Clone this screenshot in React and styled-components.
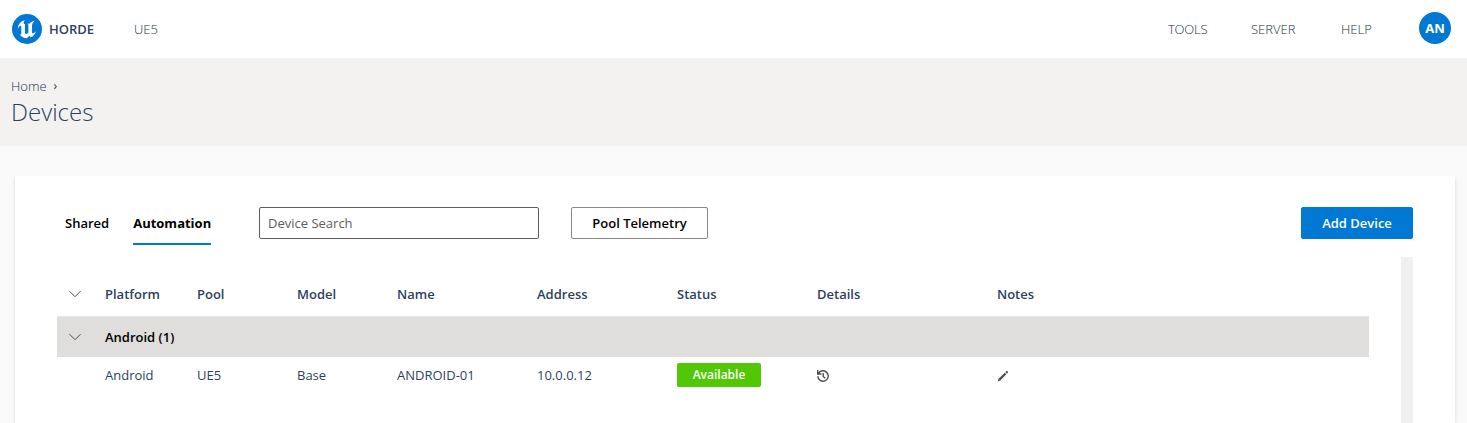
import React from "react";
import styled, { createGlobalStyle } from "styled-components";

const GlobalStyle = createGlobalStyle`
  * { box-sizing: border-box; }
  html, body { margin: 0; height: 100%; overflow: hidden; }
  body { background: #f9f9f9; color: #2d3f5f; font: 400 13px/18px "Open Sans", sans-serif; }
  #root { height: 100%; }
`;

const Page = styled.div`
  height: 100%;
  display: flex;
  flex-direction: column;
`;
const TopBar = styled.header`
  flex: none;
  height: 58px;
  padding: 0 16px 2px 12px;
  display: flex;
  align-items: center;
  background: #fff;
`;
const Brand = styled.div`
  display: flex;
  align-items: center;
  gap: 7px;
  width: 122px;
  font-size: 13px;
  font-weight: 600;
  padding-top: 2px;
`;
const NavLink = styled.a`
  width: ${(p) => p.$width};
  padding-top: 2px;
  font: 300 13px/18px "Open Sans", sans-serif;
  letter-spacing: ${(p) => p.$tracking || "0"};
  color: #25343e;
`;
const Spacer = styled.div`
  flex: 1;
`;
const Avatar = styled.div`
  width: 32px;
  height: 32px;
  border-radius: 50%;
  display: grid;
  place-items: center;
  background: #0078d4;
  color: #fff;
  font-weight: 700;
`;
const PageHeader = styled.section`
  flex: none;
  height: 88px;
  padding: 19px 12px 0 11px;
  background: #f3f2f1;
`;
const Breadcrumb = styled.div`
  display: flex;
  gap: 7px;
  line-height: 18px;
  font-weight: 300;
  color: #1c2f50;
`;
const Chevron = styled.span`
  font-size: 12px;
  font-weight: 400;
`;
const Title = styled.h1`
  margin: 0;
  font-size: 24px;
  line-height: 33px;
  font-weight: 300;
`;
const Card = styled.main`
  flex: 1;
  min-height: 0;
  margin: 30px 12px 0 15px;
  padding: 31px 42px 0;
  display: flex;
  flex-direction: column;
  background: #fff;
  box-shadow: 0 1.6px 3.6px rgba(0, 0, 0, 0.13), 0 0.3px 0.9px rgba(0, 0, 0, 0.11);
`;
const Toolbar = styled.div`
  flex: none;
  height: 50px;
  display: flex;
  align-items: flex-start;
`;
const Tabs = styled.div`
  display: flex;
  gap: 24px;
  width: 202px;
  padding-left: 8px;
`;
const Tab = styled.div`
  height: 38px;
  line-height: 32px;
  color: #000;
  font-weight: ${(p) => (p.$active ? 700 : 600)};
  border-bottom: 2px solid ${(p) => (p.$active ? "#0078d4" : "transparent")};
`;
const SearchInput = styled.input`
  width: 280px;
  height: 32px;
  margin-right: 32px;
  padding: 0 8px;
  border: 1px solid #605e5c;
  border-radius: 2px;
  font: inherit;
  outline: none;
  &::placeholder { color: #605e5c; opacity: 1; }
`;
const Button = styled.button`
  width: ${(p) => p.$width};
  height: 32px;
  padding: 0;
  border: 1px solid ${(p) => (p.$primary ? "#0078d4" : "#8a8886")};
  border-radius: 2px;
  background: ${(p) => (p.$primary ? "#0078d4" : "#fff")};
  color: ${(p) => (p.$primary ? "#fff" : "#000")};
  font: inherit;
  font-weight: 600;
`;
const ScrollArea = styled.div`
  flex: 1;
  min-height: 0;
  display: flex;
  justify-content: space-between;
`;
const Table = styled.div`
  width: 1312px;
`;
const Track = styled.div`
  width: 12px;
  background: #f0f0f0;
`;
const Row = styled.div`
  display: grid;
  grid-template-columns: 48px 92px 100px 100px 140px 140px 140px 180px 1fr;
  align-items: center;
  height: ${(p) => p.$height};
`;
const HeaderRow = styled(Row)`
  padding-bottom: 3px;
  margin-top: 17px;
  font-weight: 600;
`;
const GroupRow = styled(Row)`
  border-top: 1px solid #e9e8e7;
  background: #dfdedc;
  color: #000;
  font-weight: 600;
`;
const ToggleCell = styled.div`
  display: flex;
  padding-left: 12px;
`;
const Status = styled.div`
  width: 84px;
  height: 24px;
  border-radius: 2px;
  background: #52c705;
  color: #fff;
  font-size: 12px;
  font-weight: 600;
  line-height: 24px;
  text-align: center;
`;
const Glyph = styled.svg`
  display: block;
  flex: none;
`;
const RowAction = styled.span`
  padding-top: 2px;
`;

const Logo = () => (
  <Glyph width="30" height="30" viewBox="0 0 24 24">
    <circle cx="12" cy="12" r="12" fill="#0078d4" />
    <path
      fill="#fff"
      d="M19.13 13.729c-.206.997-1.126 3.557-4.06 4.942l-1.179-1.325-1.988 2a7.338 7.338 0 01-5.804-2.978 2.859 2.859 0 00.65.123c.326.006.678-.114.678-.66v-5.394a.89.89 0 00-1.116-.89c-.92.212-1.656 2.509-1.656 2.509a7.304 7.304 0 012.528-5.597 7.408 7.408 0 013.73-1.721c-1.006.573-1.57 1.507-1.57 2.29 0 1.262.76 1.109.984.923v7.28a1.157 1.157 0 00.148.256 1.075 1.075 0 00.88.445c.76 0 1.747-.868 1.747-.868V9.172c0-.6-.452-1.324-.905-1.572 0 0 .838-.149 1.484.346a5.537 5.537 0 01.387-.425c1.508-1.48 2.929-1.902 4.112-2.112 0 0-2.151 1.69-2.151 3.96 0 1.687.043 5.801.043 5.801.799.771 1.986-.342 3.059-1.441Z"
    />
  </Glyph>
);
const ChevronDown = () => (
  <Glyph width="12" height="12" viewBox="0 0 12 12" fill="none" stroke="#4a4a4a">
    <path d="M.5 3.2 6 8.7l5.5-5.5" />
  </Glyph>
);
const HistoryIcon = () => (
  <Glyph width="12" height="12" viewBox="0 0 12 12" fill="none" stroke="#504e4c" strokeWidth="1.4">
    <path d="M1.6 3.2A5.2 5.2 0 1 1 .8 6.2M.7 0v4h3.8M6.2 3v3.5l2 1.7" />
  </Glyph>
);
const PencilIcon = () => (
  <Glyph width="12" height="12" viewBox="0 0 12 12" fill="#504e4c">
    <path d="M.6 11.4l1-2.7 6.2-5.9 1.5 1.5-6 6.1zM8.4 2.2l.9-.9a.9.9 0 0 1 1.3 0l.2.2a.9.9 0 0 1 0 1.3l-.9.9z" />
  </Glyph>
);

const columns = ["Platform", "Pool", "Model", "Name", "Address", "Status", "Details", "Notes"];

export default function App() {
  return (
    <Page>
      <GlobalStyle />
      <TopBar>
        <Brand>
          <Logo />
          HORDE
        </Brand>
        <NavLink $width="60px">UE5</NavLink>
        <Spacer />
        <NavLink $width="83px" $tracking="-0.2px">TOOLS</NavLink>
        <NavLink $width="90px">SERVER</NavLink>
        <NavLink $width="78px">HELP</NavLink>
        <Avatar>AN</Avatar>
      </TopBar>
      <PageHeader>
        <Breadcrumb>
          Home <Chevron>›</Chevron>
        </Breadcrumb>
        <Title>Devices</Title>
      </PageHeader>
      <Card>
        <Toolbar>
          <Tabs>
            <Tab>Shared</Tab>
            <Tab $active>Automation</Tab>
          </Tabs>
          <SearchInput placeholder="Device Search" />
          <Button $width="137px">Pool Telemetry</Button>
          <Spacer />
          <Button $primary $width="112px">Add Device</Button>
        </Toolbar>
        <ScrollArea>
          <Table>
            <HeaderRow $height="42px">
              <ToggleCell><ChevronDown /></ToggleCell>
              {columns.map((name) => (
                <span key={name}>{name}</span>
              ))}
            </HeaderRow>
            <GroupRow $height="41px">
              <ToggleCell><ChevronDown /></ToggleCell>
              <span>Android (1)</span>
            </GroupRow>
            <Row $height="36px">
              <span />
              <span>Android</span>
              <span>UE5</span>
              <span>Base</span>
              <span>ANDROID-01</span>
              <span>10.0.0.12</span>
              <Status>Available</Status>
              <RowAction><HistoryIcon /></RowAction>
              <RowAction><PencilIcon /></RowAction>
            </Row>
          </Table>
          <Track />
        </ScrollArea>
      </Card>
    </Page>
  );
}
